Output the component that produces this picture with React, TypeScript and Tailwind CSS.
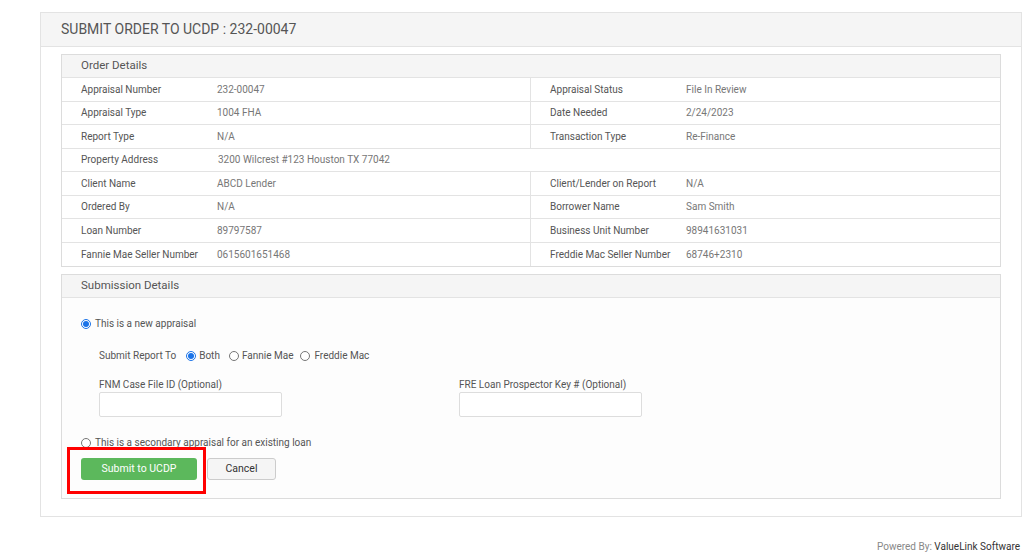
import React from 'react';

const font = { fontFamily: 'Roboto, "Liberation Sans", sans-serif' };

type Pair = [string, string];

const rows: [Pair, Pair | null][] = [
  [['Appraisal Number', '232-00047'], ['Appraisal Status', 'File In Review']],
  [['Appraisal Type', '1004 FHA'], ['Date Needed', '2/24/2023']],
  [['Report Type', 'N/A'], ['Transaction Type', 'Re-Finance']],
  [['Property Address', '3200 Wilcrest #123 Houston TX 77042'], null],
  [['Client Name', 'ABCD Lender'], ['Client/Lender on Report', 'N/A']],
  [['Ordered By', 'N/A'], ['Borrower Name', 'Sam Smith']],
  [['Loan Number', '89797587'], ['Business Unit Number', '98941631031']],
  [['Fannie Mae Seller Number', '0615601651468'], ['Freddie Mac Seller Number', '68746+2310']],
];

const Cell = ({ pair, wide }: { pair: Pair; wide?: boolean }) => (
  <div className={`flex items-center pl-[19px] ${wide ? 'col-span-2' : ''}`}>
    <span className="w-[136px] shrink-0 text-[#555]">{pair[0]}</span>
    <span className={`text-[#777] ${wide ? 'ml-px' : ''}`}>{pair[1]}</span>
  </div>
);

const Radio = ({ checked }: { checked?: boolean }) => (
  <span
    className={`inline-flex h-[10px] w-[10px] shrink-0 items-center justify-center rounded-full border ${
      checked ? 'border-[#1a73e8]' : 'border-[#767676]'
    } bg-white`}
  >
    {checked && <span className="h-[6px] w-[6px] rounded-full bg-[#1a73e8]" />}
  </span>
);

export default function App() {
  return (
    <div className="relative min-h-[560px] w-[1024px] bg-white text-[10px]" style={font}>
      <div className="pt-3 pl-10 pr-[2px]">
        <div className="border border-[#e3e3e3]">
          <div className="flex h-[34px] items-center border-b border-[#e3e3e3] bg-[#f5f5f5] pl-5">
            <h1 className="text-[14px] text-[#555]">SUBMIT ORDER TO UCDP : 232-00047</h1>
          </div>

          <div className="px-5 pt-[7px] pb-[17px]">
            {/* order details */}
            <div className="border border-[#dcdcdc]">
              <div className="flex h-[23px] items-center border-b border-[#e3e3e3] bg-[#f5f5f5] pl-[19px] text-[11.5px] text-[#555]">
                Order Details
              </div>
              {rows.map(([l, r], i) => (
                <div
                  key={i}
                  className={`grid h-[23.5px] grid-cols-2 ${i < rows.length - 1 ? 'border-b border-[#e3e3e3]' : ''}`}
                >
                  {r ? (
                    <>
                      <div className="flex border-r border-[#e3e3e3]">
                        <Cell pair={l} />
                      </div>
                      <Cell pair={r} />
                    </>
                  ) : (
                    <Cell pair={l} wide />
                  )}
                </div>
              ))}
            </div>

            {/* submission details */}
            <div className="mt-[7px] border border-[#dcdcdc] bg-[#fdfdfd]">
              <div className="flex h-[23px] items-center border-b border-[#e3e3e3] bg-[#f5f5f5] pl-[19px] text-[11.5px] text-[#555]">
                Submission Details
              </div>
              <div className="pl-[19px] pt-[19px] pb-[18px] leading-[14px] text-[#555]">
                <label className="flex items-center gap-[4px]">
                  <Radio checked />
                  <span>This is a new appraisal</span>
                </label>

                <div className="mt-[18px] flex items-center pl-[18px]">
                  <span className="mr-[10px]">Submit Report To</span>
                  <label className="flex items-center gap-[3px]">
                    <Radio checked />
                    <span>Both</span>
                  </label>
                  <label className="ml-[9px] flex items-center gap-[3px]">
                    <Radio />
                    <span>Fannie Mae</span>
                  </label>
                  <label className="ml-[7px] flex items-center gap-[4px]">
                    <Radio />
                    <span>Freddie Mac</span>
                  </label>
                </div>

                <div className="mt-[15px] flex pl-[18px]">
                  <div className="w-[360px]">
                    <div>FNM Case File ID (Optional)</div>
                    <input className="h-[25px] w-[183px] rounded-[2px] border border-[#ddd] bg-white" />
                  </div>
                  <div>
                    <div>FRE Loan Prospector Key # (Optional)</div>
                    <input className="h-[25px] w-[183px] rounded-[2px] border border-[#ddd] bg-white" />
                  </div>
                </div>

                <label className="mt-[19px] flex items-center gap-[4px]">
                  <Radio />
                  <span>This is a secondary appraisal for an existing loan</span>
                </label>

                <div className="relative mt-[8px] flex items-center gap-[10px]">
                  <button className="h-[22px] w-[116px] rounded-[3px] bg-[#5cb85c] text-[10.5px] text-white">
                    Submit to UCDP
                  </button>
                  <button className="h-[22px] w-[69px] rounded-[3px] border border-[#ccc] bg-[#f5f5f5] text-[10.5px] text-[#333]">
                    Cancel
                  </button>
                  <div className="pointer-events-none absolute left-[-14px] top-[-11px] h-[47px] w-[139px] border-[3px] border-[#f00]" />
                </div>
              </div>
            </div>
          </div>
        </div>
      </div>

      <div className="absolute right-[4px] top-[539px] text-[10px] text-[#888]">
        Powered By: <span className="text-[#333]">ValueLink Software</span>
      </div>
    </div>
  );
}
